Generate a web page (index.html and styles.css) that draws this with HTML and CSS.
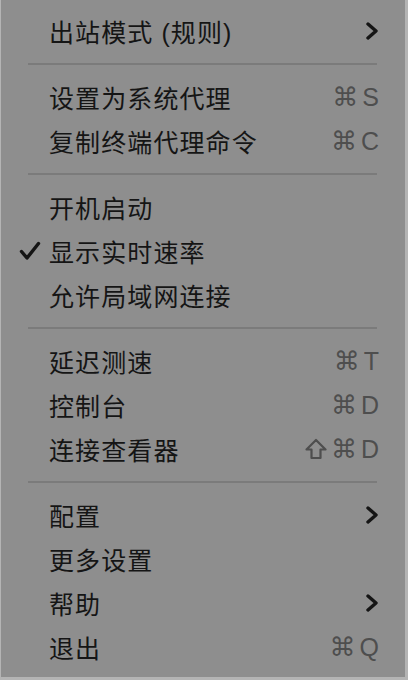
FILE: index.html
```html
<!DOCTYPE html>
<html lang="zh-CN">
<head>
  <meta charset="UTF-8">
  <meta name="viewport" content="width=device-width,initial-scale=1">
  <title>菜单</title>
  <link rel="stylesheet" href="styles.css">
</head>
<body>
  <div class="menu">
    <div class="item"><span class="gutter"></span><span class="label">出站模式 (规则)</span>
      <svg class="chevron" viewBox="0 0 14 18"><path d="M3 2 L11 9 L3 16"/></svg></div>
    <div class="sep"></div>
    <div class="item"><span class="gutter"></span><span class="label">设置为系统代理</span><span class="key"><i>⌘</i>S</span></div>
    <div class="item"><span class="gutter"></span><span class="label">复制终端代理命令</span><span class="key"><i>⌘</i>C</span></div>
    <div class="sep"></div>
    <div class="item"><span class="gutter"></span><span class="label">开机启动</span></div>
    <div class="item"><span class="gutter">
      <svg class="check" viewBox="0 0 22 20"><path d="M2.5 10.5 L8 17 L19.5 2.5"/></svg></span><span class="label">显示实时速率</span></div>
    <div class="item"><span class="gutter"></span><span class="label">允许局域网连接</span></div>
    <div class="sep"></div>
    <div class="item"><span class="gutter"></span><span class="label">延迟测速</span><span class="key"><i>⌘</i>T</span></div>
    <div class="item"><span class="gutter"></span><span class="label">控制台</span><span class="key"><i>⌘</i>D</span></div>
    <div class="item"><span class="gutter"></span><span class="label">连接查看器</span><span class="key">
      <svg class="shift" viewBox="0 0 22 22"><path d="M11 2 L20.5 11.5 L15.5 11.5 L15.5 20 L6.5 20 L6.5 11.5 L1.5 11.5 Z"/></svg><i>⌘</i>D</span></div>
    <div class="sep"></div>
    <div class="item"><span class="gutter"></span><span class="label">配置</span>
      <svg class="chevron" viewBox="0 0 14 18"><path d="M3 2 L11 9 L3 16"/></svg></div>
    <div class="item"><span class="gutter"></span><span class="label">更多设置</span></div>
    <div class="item"><span class="gutter"></span><span class="label">帮助</span>
      <svg class="chevron" viewBox="0 0 14 18"><path d="M3 2 L11 9 L3 16"/></svg></div>
    <div class="item"><span class="gutter"></span><span class="label">退出</span><span class="key"><i>⌘</i>Q</span></div>
  </div>
</body>
</html>
```

FILE: styles.css
```css
html, body { margin: 0; padding: 0; background: #b4b4b4; }
body { font-family: "Liberation Sans", "Noto Sans CJK SC", sans-serif; color: #151515; }
.menu {
  width: 404px;
  height: 677px;
  margin-left: 1px;
  background: #8e8e8e;
  padding-top: 9px;
  box-sizing: border-box;
}
.item { height: 44px; display: flex; align-items: center; padding-right: 29px; }
.gutter { width: 48px; flex: none; display: flex; align-items: center; }
.label { font-size: 25px; letter-spacing: 1.1px; white-space: nowrap; }
.key {
  margin-left: auto;
  margin-right: -3px;
  display: flex;
  align-items: center;
  font-size: 25px;
  color: #4e4e4e;
}
.key i {
  font-style: normal;
  font-family: "DejaVu Sans", sans-serif;
  font-size: 26px;
  margin-right: 4px;
}
.shift { width: 22px; height: 22px; margin-right: 4px; }
.shift path { fill: none; stroke: #4e4e4e; stroke-width: 2.2; stroke-linejoin: round; }
.chevron { margin-left: auto; margin-right: -3px; width: 14px; height: 18px; }
.chevron path, .check path { fill: none; stroke: #151515; stroke-width: 3.4; stroke-linecap: round; stroke-linejoin: round; }
.check { width: 22px; height: 20px; margin-left: 18px; }
.sep { height: 2px; background: #7b7b7b; margin: 10px 28px 10px 27px; }
```
